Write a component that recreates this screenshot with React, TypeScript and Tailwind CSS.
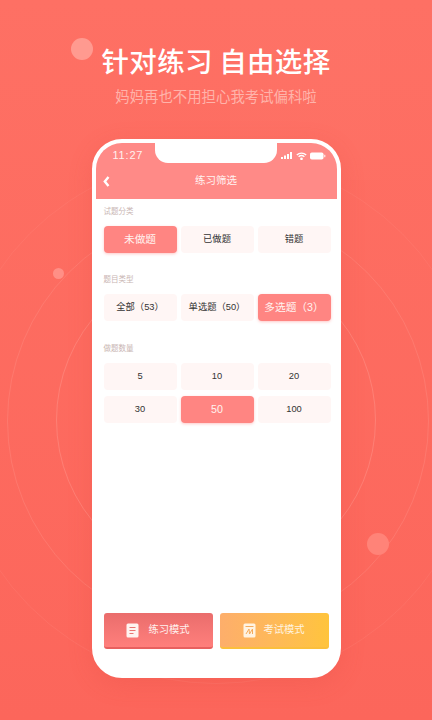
const font = { fontFamily: '"Liberation Sans", "Noto Sans CJK SC", sans-serif' }

function Choice({ label, active }: { label: string; active?: boolean }) {
  return (
    <div
      className={
        active
          ? 'h-[27px] flex items-center justify-center rounded-[4px] bg-[#ff8582] text-[10.7px] text-[#fff3f0] shadow-[0_1px_3px_rgba(255,133,130,0.45)]'
          : 'h-[27px] flex items-center justify-center rounded-[4px] bg-[#fff6f5] text-[9.3px] text-[#333333]'
      }
    >
      {label}
    </div>
  )
}

function Label({ text }: { text: string }) {
  return <div className="text-[7.5px] leading-[10px] text-[#c9b5b3]">{text}</div>
}

export default function App() {
  return (
    <div
      style={font}
      className="relative h-[720px] w-[432px] overflow-hidden bg-gradient-to-b from-[#fe7064] to-[#fc665b]"
    >
      {/* background decoration */}
      <div className="absolute left-[7px] top-[210px] h-[422px] w-[422px] rounded-full border border-[#ff9a90]/30" />
      <div className="absolute left-[56px] top-[260px] h-[320px] w-[320px] rounded-full border border-[#ffa79e]/35" />
      <div className="absolute left-[-48px] top-[156px] h-[528px] w-[528px] rounded-full border border-[#ff8f85]/20" />
      <div className="absolute left-[230px] top-0 h-[180px] w-[150px] bg-[#ff8074]/15" />
      <div className="absolute left-[71px] top-[38px] h-[22px] w-[22px] rounded-full bg-[#ff9a90]" />
      <div className="absolute left-[53px] top-[268px] h-[11px] w-[11px] rounded-full bg-[#ff8f86]" />
      <div className="absolute left-[367px] top-[533px] h-[22px] w-[22px] rounded-full bg-[#ff8378]" />

      <div className="relative flex flex-col items-center">
        <h1 className="mt-[39px] h-[42px] text-[27.5px] leading-[42px] font-medium tracking-[0.3px] whitespace-pre text-white" style={{ fontFamily: '"Noto Sans CJK SC", sans-serif' }}>
          针对练习 自由选择
        </h1>
        <p className="mt-[4px] h-[22px] text-[14.4px] leading-[22px] whitespace-nowrap text-[#ffb3aa]" style={{ fontFamily: '"Noto Sans CJK SC", sans-serif' }}>
          妈妈再也不用担心我考试偏科啦
        </p>

        {/* phone */}
        <div className="relative mt-[32px] flex h-[539px] w-[249px] flex-col overflow-hidden rounded-[30px] border-[4px] border-white bg-white shadow-[0_6px_24px_rgba(220,70,60,0.2)]">
          <div className="absolute left-[59px] top-[-4px] h-[24px] w-[122px] rounded-b-[13px] bg-white" />
          <div className="flex h-[56px] shrink-0 flex-col bg-[#ff8a87] text-white">
            <div className="flex h-[25px] items-center justify-between pl-[17px] pr-[11px]">
              <span className="text-[11px] tracking-[0.8px] text-[#fff0ee]">
                11:27
              </span>
              <div className="flex items-center gap-[3px]">
                <svg width="12" height="7" viewBox="0 0 12 7" fill="#fff">
                  <rect x="0" y="5" width="2" height="2" />
                  <rect x="3" y="3.5" width="2" height="3.5" />
                  <rect x="6" y="2" width="2" height="5" />
                  <rect x="9" y="0" width="2" height="7" />
                </svg>
                <svg width="11" height="8" viewBox="0 0 11 8" fill="none" stroke="#fff" strokeWidth="1.3">
                  <path d="M0.8 3 A7 7 0 0 1 10.2 3" />
                  <path d="M2.6 4.8 A4.4 4.4 0 0 1 8.4 4.8" />
                  <circle cx="5.5" cy="6.8" r="0.7" fill="#fff" />
                </svg>
                <svg width="16" height="8" viewBox="0 0 16 8" fill="#fff">
                  <rect x="0" y="0.5" width="13.5" height="7" rx="1.8" />
                  <rect x="14.3" y="2.8" width="1" height="2.4" />
                </svg>
              </div>
            </div>
            <div className="relative flex flex-1 items-center justify-center pb-[5px] text-[10.5px] text-[#fff3f1]">
              <svg className="absolute left-[7px] top-[8px]" width="7" height="11" viewBox="0 0 7 11" fill="none" stroke="#fff" strokeWidth="2.4">
                <path d="M5.5 1 L1.8 5.5 L5.5 10" />
              </svg>
              练习筛选
            </div>
          </div>

          <div className="flex flex-1 flex-col pl-[8px] pr-[6px]">
            <div className="mt-[8px]">
              <Label text="试题分类" />
            </div>
            <div className="mt-[9px] grid grid-cols-3 gap-x-[4px]">
              <Choice label="未做题" active />
              <Choice label="已做题" />
              <Choice label="错题" />
            </div>
            <div className="mt-[22px]">
              <Label text="题目类型" />
            </div>
            <div className="mt-[9px] grid grid-cols-3 gap-x-[4px]">
              <Choice label="全部（53）" />
              <Choice label="单选题（50）" />
              <Choice label="多选题（3）" active />
            </div>
            <div className="mt-[23px]">
              <Label text="做题数量" />
            </div>
            <div className="mt-[9px] grid grid-cols-3 gap-x-[4px] gap-y-[6px]">
              <Choice label="5" />
              <Choice label="10" />
              <Choice label="20" />
              <Choice label="30" />
              <Choice label="50" active />
              <Choice label="100" />
            </div>

            <div className="mt-auto mb-[25px] mr-[2px] grid grid-cols-2 gap-x-[7px]">
              <div className="flex h-[36px] items-center justify-center gap-[9px] rounded-[3px] border-b-2 border-[#e8605f] bg-gradient-to-b from-[#ea6d6c] to-[#ff7f7c] text-[10.3px] text-[#fff0ee]">
                <svg width="13" height="15" viewBox="0 0 13 15">
                  <rect x="0.5" y="0.5" width="12" height="14" rx="1.5" fill="#fff3f0" />
                  <path d="M3.5 4.5 H9.5 M3.5 7.5 H9.5 M3.5 10.5 H7.5" stroke="#ea7472" strokeWidth="1.2" />
                </svg>
                练习模式
              </div>
              <div className="flex h-[36px] items-center justify-center gap-[7px] rounded-[3px] border-b-2 border-[#fbbf3c] bg-gradient-to-r from-[#fdae6b] to-[#ffc43c] text-[10.3px] text-[#fff4e0]">
                <svg width="13" height="15" viewBox="0 0 13 15">
                  <rect x="0.5" y="0.5" width="12" height="14" rx="1.5" fill="#fff3e2" />
                  <path d="M2.5 3.5 H10.5 M3 11 L6 6 L6.5 11 L9.5 6 L9.5 11" stroke="#f5ab5c" strokeWidth="1" fill="none" />
                </svg>
                考试模式
              </div>
            </div>
          </div>
        </div>
      </div>
    </div>
  )
}
